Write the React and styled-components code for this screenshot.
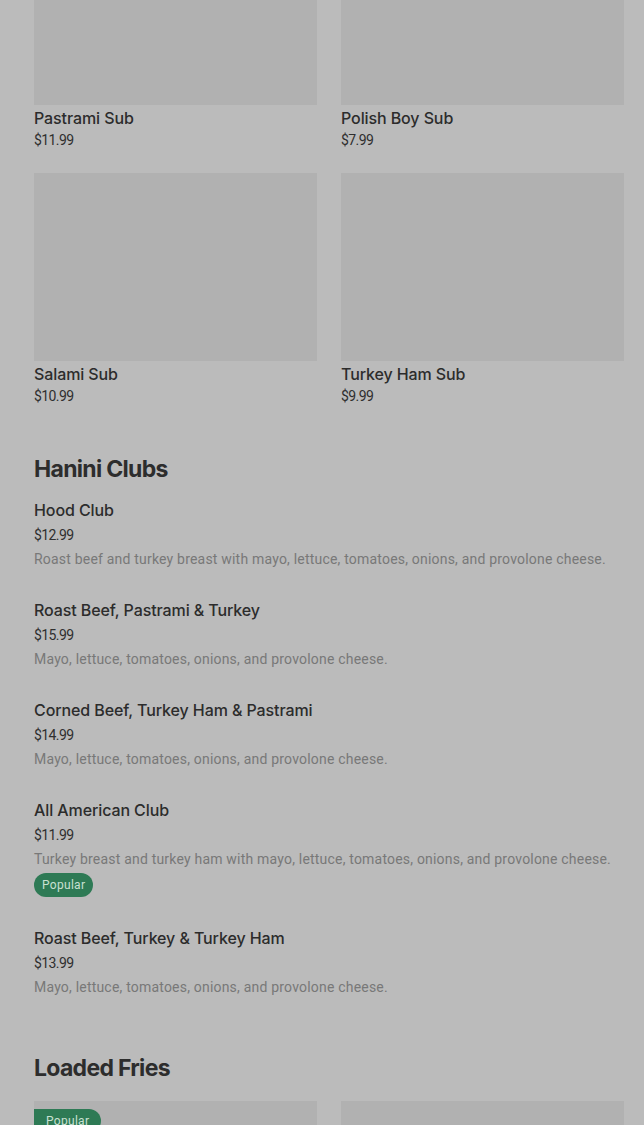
import React from "react";
import styled, { createGlobalStyle } from "styled-components";

const Global = createGlobalStyle`
  html, body { margin: 0; padding: 0; background: #bbbbbb; }
  body { font-family: Inter, "Noto Sans", sans-serif; color: #2c2c2c; overflow: hidden; }
`;

const Page = styled.div`
  margin-top: -83px;
  padding: 0 20px 0 34px;
  display: flex;
  flex-direction: column;
`;

const Section = styled.section`
  display: flex;
  flex-direction: column;
  padding-top: ${(p) => p.$top || 0}px;
`;

const Heading = styled.h2`
  margin: 0;
  font-size: 23px;
  line-height: 32px;
  font-weight: 700;
  letter-spacing: -0.7px;
  color: #2d2d2d;
`;

const Grid = styled.div`
  display: grid;
  grid-template-columns: 1fr 1fr;
  column-gap: 24px;
  row-gap: 23px;
  padding-top: ${(p) => p.$top || 0}px;
`;

const Card = styled.div`
  display: flex;
  flex-direction: column;
`;

const ImageBox = styled.div`
  position: relative;
  height: 188px;
  background: #b1b1b1;
  margin-bottom: 3px;
`;

const Name = styled.div`
  font-size: 16px;
  line-height: 20px;
  font-weight: 500;
  letter-spacing: -0.1px;
  color: #2c2c2c;
`;

const Price = styled.div`
  font-family: Roboto, "Noto Sans", sans-serif;
  font-size: 14px;
  line-height: 20px;
  letter-spacing: -0.6px;
  color: #2f2f2f;
  margin-top: ${(p) => p.$gap || 0}px;
`;

const List = styled.div`
  display: flex;
  flex-direction: column;
  padding-top: 15px;
  gap: 31px;
`;

const Item = styled.div`
  display: flex;
  flex-direction: column;
`;

const Desc = styled.div`
  font-family: Roboto, "Noto Sans", sans-serif;
  font-size: 14px;
  line-height: 20px;
  letter-spacing: 0.2px;
  color: #787878;
  margin-top: 4px;
  white-space: nowrap;
`;

const Badge = styled.span`
  align-self: flex-start;
  margin-top: 4px;
  height: 24px;
  line-height: 24px;
  padding: 0 8px;
  border-radius: 12px;
  background: #2e7a55;
  color: #c9e0d2;
  font-family: Roboto, "Noto Sans", sans-serif;
  font-size: 12px;
  font-weight: 400;
  letter-spacing: 0.3px;
`;

const CornerBadge = styled.span`
  position: absolute;
  top: 8px;
  left: 0;
  height: 24px;
  line-height: 24px;
  padding: 0 12px;
  border-radius: 0 12px 12px 0;
  background: #2e7a55;
  color: #c9e0d2;
  font-family: Roboto, "Noto Sans", sans-serif;
  font-size: 12px;
  font-weight: 400;
  letter-spacing: 0.3px;
`;

const subs = [
  { name: "Pastrami Sub", price: "$11.99" },
  { name: "Polish Boy Sub", price: "$7.99" },
  { name: "Salami Sub", price: "$10.99" },
  { name: "Turkey Ham Sub", price: "$9.99" },
];

const common = "Mayo, lettuce, tomatoes, onions, and provolone cheese.";
const clubs = [
  { name: "Hood Club", price: "$12.99", desc: "Roast beef and turkey breast with mayo, lettuce, tomatoes, onions, and provolone cheese." },
  { name: "Roast Beef, Pastrami & Turkey", price: "$15.99", desc: common },
  { name: "Corned Beef, Turkey Ham & Pastrami", price: "$14.99", desc: common },
  { name: "All American Club", price: "$11.99", desc: "Turkey breast and turkey ham with mayo, lettuce, tomatoes, onions, and provolone cheese.", popular: true },
  { name: "Roast Beef, Turkey & Turkey Ham", price: "$13.99", desc: common },
];

export default function App() {
  return (
    <>
      <Global />
      <Page>
        <Grid>
          {subs.map((s) => (
            <Card key={s.name}>
              <ImageBox />
              <Name>{s.name}</Name>
              <Price $gap={2}>{s.price}</Price>
            </Card>
          ))}
        </Grid>
        <Section $top={47}>
          <Heading>Hanini Clubs</Heading>
          <List>
            {clubs.map((c) => (
              <Item key={c.name}>
                <Name>{c.name}</Name>
                <Price $gap={5}>{c.price}</Price>
                <Desc>{c.desc}</Desc>
                {c.popular && <Badge>Popular</Badge>}
              </Item>
            ))}
          </List>
        </Section>
        <Section $top={55}>
          <Heading>Loaded Fries</Heading>
          <Grid $top={17}>
            <Card>
              <ImageBox>
                <CornerBadge>Popular</CornerBadge>
              </ImageBox>
            </Card>
            <Card>
              <ImageBox />
            </Card>
          </Grid>
        </Section>
      </Page>
    </>
  );
}
